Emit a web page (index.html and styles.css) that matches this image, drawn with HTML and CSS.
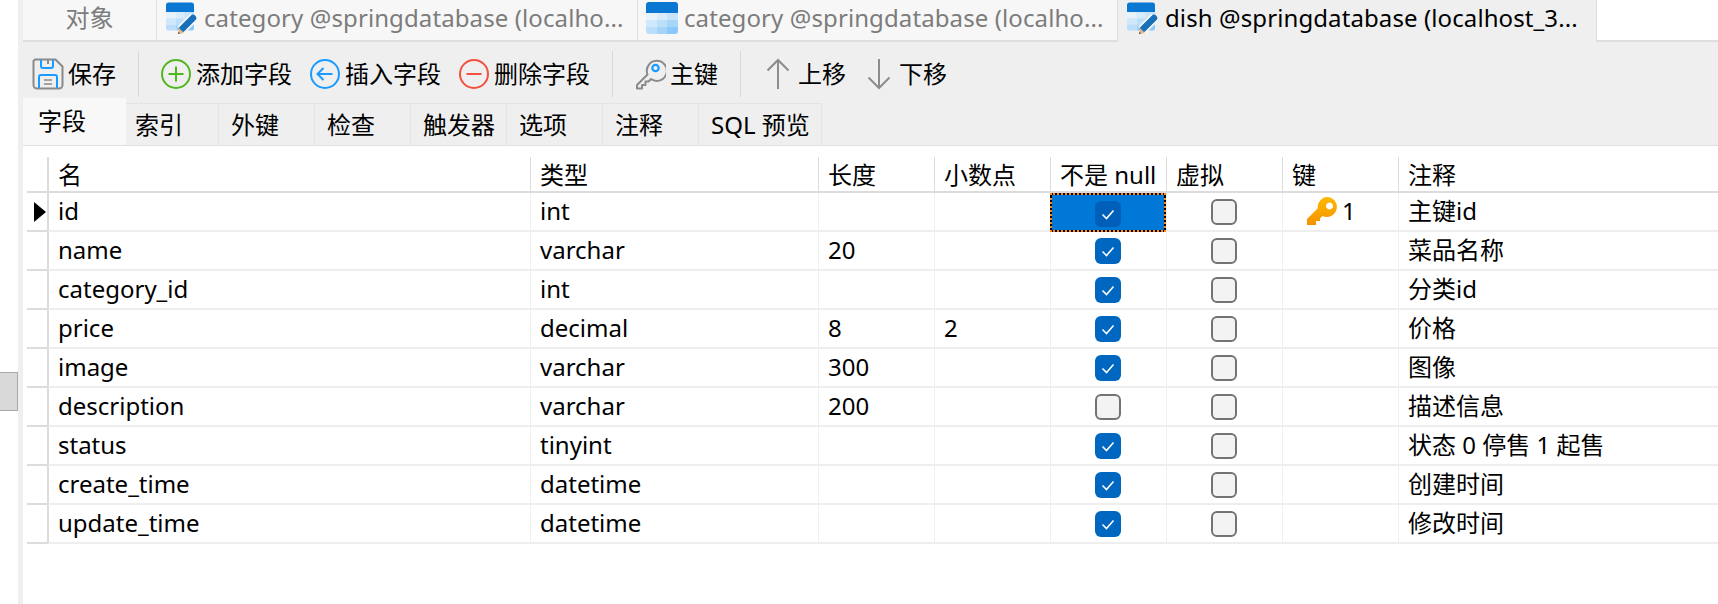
FILE: index.html
```html
<!DOCTYPE html>
<html lang="zh">
<head>
    <meta charset="UTF-8">
    <title>dish @springdatabase</title>
    <link rel="stylesheet" href="styles.css">
</head>
<body>
    <svg class="defs" width="0" height="0">
        <symbol id="tbl" viewBox="0 0 32 32">
            <path fill="#0a78d2" d="M0 11V3a3 3 0 0 1 3-3h26a3 3 0 0 1 3 3v8z"/>
            <rect fill="#e6f3fc" x="0" y="11" width="11" height="7"/>
            <rect fill="#d8ecfb" x="11" y="11" width="10" height="7"/>
            <rect fill="#c6e4fa" x="21" y="11" width="11" height="7"/>
            <rect fill="#cfe8fb" x="0" y="18" width="11" height="7"/>
            <rect fill="#bcdffa" x="11" y="18" width="10" height="7"/>
            <rect fill="#a8d6f9" x="21" y="18" width="11" height="7"/>
            <path fill="#bbdefa" d="M0 25h11v7H3a3 3 0 0 1-3-3z"/>
            <rect fill="#a6d4f9" x="11" y="25" width="10" height="7"/>
            <path fill="#8dc9f8" d="M21 25h11v4a3 3 0 0 1-3 3h-8z"/>
        </symbol>
        <symbol id="tbl-edit" viewBox="0 0 32 32">
            <use href="#tbl" width="28" height="29"/>
            <path d="M15 28L28 15" stroke="#f7f7f7" stroke-width="10"/>
            <path d="M16 27L27 16" stroke="#1870b8" stroke-width="6.5" stroke-linecap="round"/>
            <path fill="#e8b98a" d="M12 32l1-6 5 5z"/>
            <path fill="#555" d="M12 32l.4-2.2 1.9 1.8z"/>
        </symbol>
        <symbol id="chk" viewBox="0 0 26 26">
            <path d="M7.5 13.5l4 4 7-8" fill="none" stroke="#fff" stroke-width="1.6"/>
        </symbol>
    </svg>

    <div class="rail"><div class="thumb"></div></div>

    <div class="main">
        <div class="tabbar">
            <div class="tab tab-obj">对象</div>
            <div class="tab tab-a"><svg class="tabicon"><use href="#tbl-edit"/></svg><span>category @springdatabase (localho...</span></div>
            <div class="tab tab-b"><svg class="tabicon"><use href="#tbl"/></svg><span>category @springdatabase (localho...</span></div>
            <div class="tab tab-c active"><svg class="tabicon"><use href="#tbl-edit"/></svg><span>dish @springdatabase (localhost_3...</span></div>
            <div class="tabrest"></div>
        </div>

        <div class="toolbar">
            <div class="tool">
                <svg class="icon" viewBox="0 0 32 32" fill="none">
                    <path d="M3 1.5h20.5l7 7V27a3.5 3.5 0 0 1-3.5 3.5H5A3.5 3.5 0 0 1 1.5 27V3z" stroke="#8a8a8a" stroke-width="2"/>
                    <path d="M9 2v6a2 2 0 0 0 2 2h8a2 2 0 0 0 2-2V2" stroke="#1a9bff" stroke-width="2"/>
                    <path d="M16 2v4" stroke="#8a8a8a" stroke-width="2"/>
                    <path d="M7 30V19a2 2 0 0 1 2-2h14a2 2 0 0 1 2 2v11" stroke="#1a9bff" stroke-width="2"/>
                    <path d="M12 22h8M12 26h8" stroke="#8a8a8a" stroke-width="1.6"/>
                </svg>
                <span>保存</span>
            </div>
            <div class="sep"></div>
            <div class="tool">
                <svg class="icon" viewBox="0 0 32 32" fill="none" stroke="#4fb81c" stroke-width="2">
                    <circle cx="16" cy="16" r="14"/>
                    <path d="M16 8.5v15M8.5 16h15"/>
                </svg>
                <span>添加字段</span>
            </div>
            <div class="tool">
                <svg class="icon" viewBox="0 0 32 32" fill="none" stroke="#1a9bff" stroke-width="2">
                    <circle cx="16" cy="16" r="14"/>
                    <path d="M23.5 16h-15M14.5 10l-6 6 6 6"/>
                </svg>
                <span>插入字段</span>
            </div>
            <div class="tool">
                <svg class="icon" viewBox="0 0 32 32" fill="none" stroke="#f4503f" stroke-width="2">
                    <circle cx="16" cy="16" r="14"/>
                    <path d="M8.5 16h15"/>
                </svg>
                <span>删除字段</span>
            </div>
            <div class="sep"></div>
            <div class="tool">
                <svg class="icon" viewBox="0 0 32 32" fill="none">
                    <path d="M13.5 16.5L3 27v3.5h5V27h3.5v-3.5h3l2.5-2.5a10 10 0 1 0-3.5-4.5z" stroke="#8a8a8a" stroke-width="2" stroke-linejoin="round"/>
                    <circle cx="21.5" cy="10" r="3.2" stroke="#1a9bff" stroke-width="2.2"/>
                </svg>
                <span>主键</span>
            </div>
            <div class="sep"></div>
            <div class="tool">
                <svg class="icon" viewBox="0 0 32 32" fill="none" stroke="#8c8c8c" stroke-width="2">
                    <path d="M16 31V2M5.5 12.5L16 2l10.5 10.5"/>
                </svg>
                <span>上移</span>
            </div>
            <div class="tool">
                <svg class="icon" viewBox="0 0 32 32" fill="none" stroke="#8c8c8c" stroke-width="2">
                    <path d="M16 1v29M5.5 19.5L16 30l10.5-10.5"/>
                </svg>
                <span>下移</span>
            </div>
        </div>

        <div class="subtabs">
            <div class="subtab current">字段</div>
            <div class="subtab first">索引</div>
            <div class="subtab">外键</div>
            <div class="subtab">检查</div>
            <div class="subtab">触发器</div>
            <div class="subtab">选项</div>
            <div class="subtab">注释</div>
            <div class="subtab wide">SQL 预览</div>
        </div>

        <div class="content">
            <table class="fields">
                <colgroup>
                    <col class="c-gutter"><col class="c-name"><col class="c-type">
                    <col class="c-num"><col class="c-num"><col class="c-num"><col class="c-num"><col class="c-num"><col>
                </colgroup>
                <thead>
                    <tr><th class="gutter"></th><th>名</th><th>类型</th><th>长度</th><th>小数点</th><th>不是 null</th><th>虚拟</th><th>键</th><th>注释</th></tr>
                </thead>
                <tbody>
                    <tr>
                        <td class="gutter"><span class="arrow"></span></td><td>id</td><td>int</td><td></td><td></td>
                        <td class="box selected"><span class="chk on"><svg><use href="#chk"/></svg></span></td>
                        <td class="box"><span class="chk"></span></td>
                        <td class="keycell"><div class="keywrap">
                            <svg class="goldkey" viewBox="0 0 30 28">
                                <defs><linearGradient id="gold" x1="0" y1="0" x2="0" y2="1"><stop offset="0" stop-color="#fdb900"/><stop offset="1" stop-color="#f59300"/></linearGradient></defs>
                                <path fill="url(#gold)" fill-rule="evenodd" d="M20 0a10 10 0 1 1-4.5 19L13 21.5V24H9v4H0v-6L10.8 11.2A10 10 0 0 1 20 0zm2.5 5.5a3.5 3.5 0 1 0 .01 0z"/>
                            </svg>
                            <span>1</span>
                        </div></td>
                        <td>主键id</td>
                    </tr>
                    <tr>
                        <td class="gutter"></td><td>name</td><td>varchar</td><td>20</td><td></td>
                        <td class="box"><span class="chk on"><svg><use href="#chk"/></svg></span></td>
                        <td class="box"><span class="chk"></span></td><td></td><td>菜品名称</td>
                    </tr>
                    <tr>
                        <td class="gutter"></td><td>category_id</td><td>int</td><td></td><td></td>
                        <td class="box"><span class="chk on"><svg><use href="#chk"/></svg></span></td>
                        <td class="box"><span class="chk"></span></td><td></td><td>分类id</td>
                    </tr>
                    <tr>
                        <td class="gutter"></td><td>price</td><td>decimal</td><td>8</td><td>2</td>
                        <td class="box"><span class="chk on"><svg><use href="#chk"/></svg></span></td>
                        <td class="box"><span class="chk"></span></td><td></td><td>价格</td>
                    </tr>
                    <tr>
                        <td class="gutter"></td><td>image</td><td>varchar</td><td>300</td><td></td>
                        <td class="box"><span class="chk on"><svg><use href="#chk"/></svg></span></td>
                        <td class="box"><span class="chk"></span></td><td></td><td>图像</td>
                    </tr>
                    <tr>
                        <td class="gutter"></td><td>description</td><td>varchar</td><td>200</td><td></td>
                        <td class="box"><span class="chk"></span></td>
                        <td class="box"><span class="chk"></span></td><td></td><td>描述信息</td>
                    </tr>
                    <tr>
                        <td class="gutter"></td><td>status</td><td>tinyint</td><td></td><td></td>
                        <td class="box"><span class="chk on"><svg><use href="#chk"/></svg></span></td>
                        <td class="box"><span class="chk"></span></td><td></td><td>状态 0 停售 1 起售</td>
                    </tr>
                    <tr>
                        <td class="gutter"></td><td>create_time</td><td>datetime</td><td></td><td></td>
                        <td class="box"><span class="chk on"><svg><use href="#chk"/></svg></span></td>
                        <td class="box"><span class="chk"></span></td><td></td><td>创建时间</td>
                    </tr>
                    <tr>
                        <td class="gutter"></td><td>update_time</td><td>datetime</td><td></td><td></td>
                        <td class="box"><span class="chk on"><svg><use href="#chk"/></svg></span></td>
                        <td class="box"><span class="chk"></span></td><td></td><td>修改时间</td>
                    </tr>
                </tbody>
            </table>
        </div>
    </div>
</body>
</html>
```

FILE: styles.css
```css
html, body {
    height: 100%;
}
body {
    margin: 0;
    display: flex;
    overflow: hidden;
    background-color: #fff;
    color: #000;
    font-family: "Noto Sans", "Noto Sans CJK SC", sans-serif;
    font-size: 24px;
    line-height: 32px;
}
.defs {
    position: absolute;
}

/* left rail with the scroll thumb */
.rail {
    width: 18px;
    flex: none;
    padding-top: 372px;
    box-sizing: border-box;
}
.thumb {
    height: 37px;
    background-color: #d9d9d9;
    border: 1px solid #a8a8a8;
    border-left: none;
}
.main {
    flex: 1;
    min-width: 0;
    display: flex;
    flex-direction: column;
    border-left: 5px solid #efefef;
}

/* window tabs */
.tabbar {
    display: flex;
    height: 42px;
    flex: none;
}
.tab {
    display: flex;
    align-items: center;
    box-sizing: border-box;
    height: 42px;
    padding-bottom: 4px;
    background-color: #f7f7f7;
    color: #7c7c7c;
    letter-spacing: 0.1px;
    border-right: 1px solid #dedede;
    border-bottom: 2px solid #dedede;
    white-space: nowrap;
}
.tab-obj {
    width: 134px;
    justify-content: center;
}
.tab-a {
    width: 481px;
    padding-left: 9px;
}
.tab-b {
    width: 480px;
    padding-left: 8px;
}
.tab-c {
    width: 479px;
    padding-left: 9px;
}
.tab.active {
    padding-bottom: 6px;
    background-color: #efefef;
    color: #000;
    border-bottom: none;
}
.tabrest {
    flex: 1;
    border-bottom: 2px solid #dedede;
    box-sizing: border-box;
}
.tabicon {
    width: 32px;
    height: 32px;
    flex: none;
    margin-right: 6px;
}

/* toolbar */
.toolbar {
    display: flex;
    align-items: center;
    gap: 17px;
    box-sizing: border-box;
    height: 57px;
    flex: none;
    padding: 6px 0 0 9px;
    background-color: #efefef;
}
.tool {
    display: flex;
    align-items: center;
    gap: 4px;
}
.icon {
    width: 32px;
    height: 32px;
    flex: none;
}
.sep {
    width: 1px;
    height: 46px;
    margin: 0 4.5px;
    background-color: #d8d8d8;
}

/* field / index / ... tabs */
.subtabs {
    display: flex;
    align-items: flex-end;
    height: 47px;
    flex: none;
    background-color: #efefef;
    border-bottom: 1px solid #e0e0e0;
    box-sizing: border-box;
}
.subtab {
    box-sizing: border-box;
    width: 96px;
    height: 42px;
    padding: 5px 0 0 12px;
    border-right: 1px solid #e4e4e4;
    border-top: 1px solid #e4e4e4;
}
.subtab.current {
    width: 103px;
    height: 47px;
    padding: 7px 0 0 15px;
    background-color: #f8f8f8;
    border-top: none;
    border-right: none;
}
.subtab.first {
    width: 93px;
    padding-left: 9px;
}
.subtab.wide {
    width: 123px;
}

/* grid */
.content {
    flex: 1;
    padding: 11px 0 0 4px;
    background-color: #fff;
}
.fields {
    width: 100%;
    table-layout: fixed;
    border-collapse: separate;
    border-spacing: 0;
}
.c-gutter {
    width: 21px;
}
.c-name {
    width: 482px;
}
.c-type {
    width: 288px;
}
.c-num {
    width: 116px;
}
th, td {
    box-sizing: border-box;
    padding: 0 0 0 9px;
    font-weight: normal;
    text-align: left;
    white-space: nowrap;
}
th {
    height: 36px;
    padding-top: 2px;
    border-left: 1px solid #dcdcdc;
    border-bottom: 2px solid #dcdcdc;
}
td {
    height: 39px;
    padding-bottom: 2px;
    border-left: 1px solid #f0f0f0;
    border-bottom: 2px solid #eeeeee;
}
th.gutter, td.gutter {
    padding: 0;
    border-left: none;
    border-right: 1px solid #dcdcdc;
}
td.gutter {
    border-bottom-color: #dcdcdc;
}
td.gutter + td {
    border-left-color: #dcdcdc;
}
.arrow {
    display: block;
    width: 0;
    height: 0;
    margin-left: 7px;
    border-left: 12px solid #000;
    border-top: 10px solid transparent;
    border-bottom: 10px solid transparent;
}
td.box {
    padding: 0 1px 4px 0;
    text-align: center;
}
td.selected {
    padding-bottom: 3px;
    background-color: #000;
    border: 2px dotted #ff8a1a;
    box-shadow: inset 0 0 0 60px #0078d7;
}
.chk {
    display: inline-block;
    box-sizing: border-box;
    width: 26px;
    height: 26px;
    vertical-align: middle;
    background-color: #f3f3f3;
    border: 2px solid #737373;
    border-radius: 6px;
}
.chk.on {
    background-color: #0067c0;
    border: none;
}
.selected .chk.on {
    background-color: #005fb8;
}
.chk svg {
    display: block;
    width: 26px;
    height: 26px;
}
td.keycell {
    padding-left: 24px;
}
.keywrap {
    display: flex;
    align-items: center;
    gap: 5px;
}
.goldkey {
    width: 30px;
    height: 28px;
    flex: none;
}
```
